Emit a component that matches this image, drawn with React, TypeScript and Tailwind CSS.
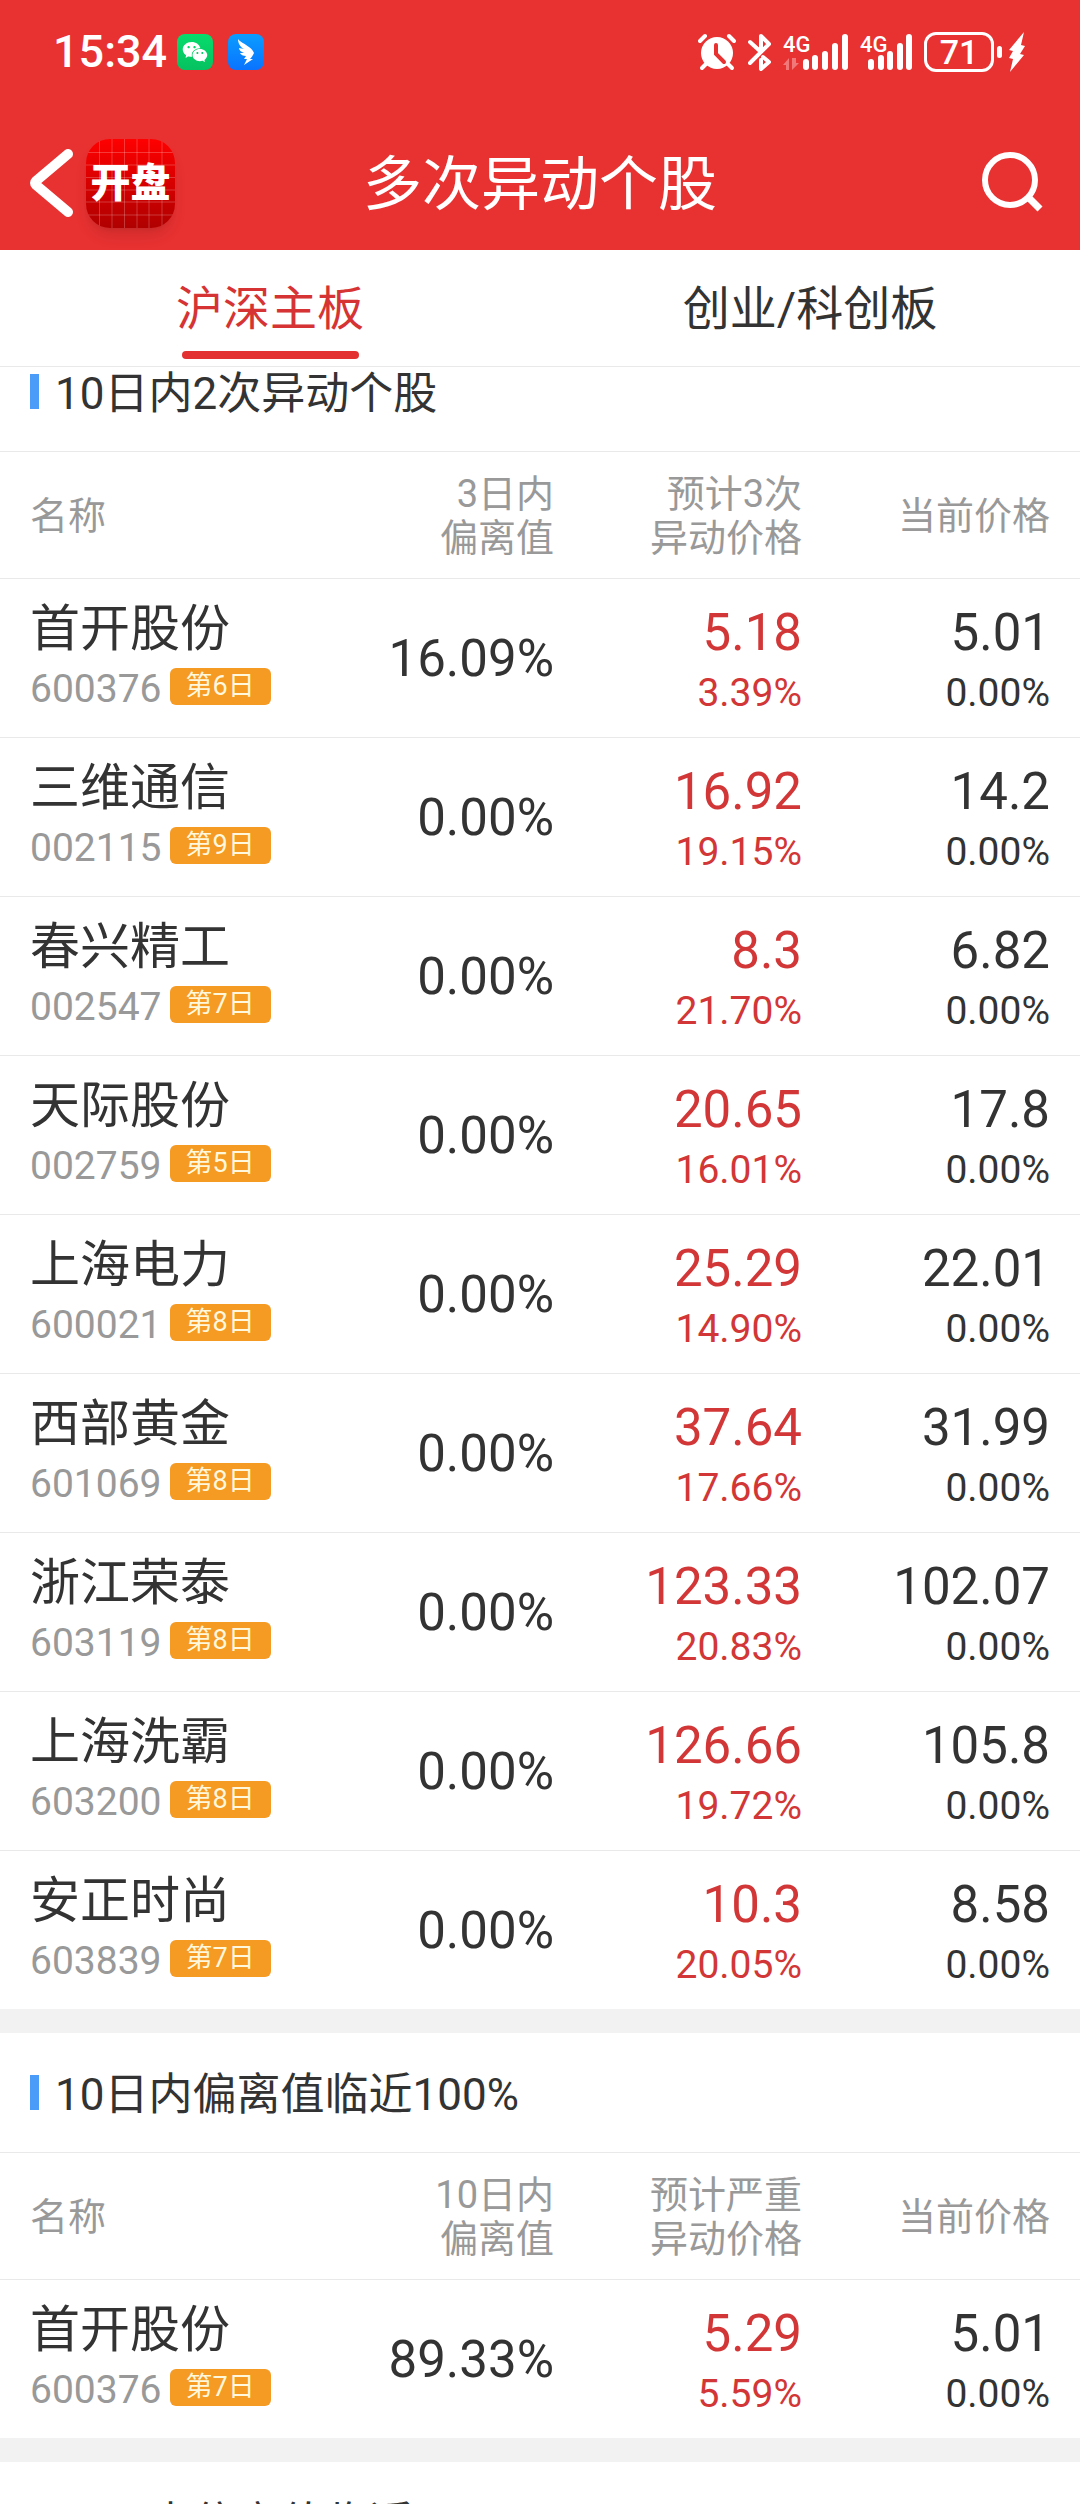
import React from 'react'
import { AiFillWechat } from 'react-icons/ai'

type Stock = {
  name: string
  code: string
  day: string
  deviation: string
  target: string
  targetPct: string
  price: string
  pricePct: string
}

type Section = {
  title: string
  columns: string[][]
  stocks: Stock[]
}

const sections: Section[] = [
  {
    title: '10日内2次异动个股',
    columns: [['名称'], ['3日内', '偏离值'], ['预计3次', '异动价格'], ['当前价格']],
    stocks: [
      { name: '首开股份', code: '600376', day: '第6日', deviation: '16.09%', target: '5.18', targetPct: '3.39%', price: '5.01', pricePct: '0.00%' },
      { name: '三维通信', code: '002115', day: '第9日', deviation: '0.00%', target: '16.92', targetPct: '19.15%', price: '14.2', pricePct: '0.00%' },
      { name: '春兴精工', code: '002547', day: '第7日', deviation: '0.00%', target: '8.3', targetPct: '21.70%', price: '6.82', pricePct: '0.00%' },
      { name: '天际股份', code: '002759', day: '第5日', deviation: '0.00%', target: '20.65', targetPct: '16.01%', price: '17.8', pricePct: '0.00%' },
      { name: '上海电力', code: '600021', day: '第8日', deviation: '0.00%', target: '25.29', targetPct: '14.90%', price: '22.01', pricePct: '0.00%' },
      { name: '西部黄金', code: '601069', day: '第8日', deviation: '0.00%', target: '37.64', targetPct: '17.66%', price: '31.99', pricePct: '0.00%' },
      { name: '浙江荣泰', code: '603119', day: '第8日', deviation: '0.00%', target: '123.33', targetPct: '20.83%', price: '102.07', pricePct: '0.00%' },
      { name: '上海洗霸', code: '603200', day: '第8日', deviation: '0.00%', target: '126.66', targetPct: '19.72%', price: '105.8', pricePct: '0.00%' },
      { name: '安正时尚', code: '603839', day: '第7日', deviation: '0.00%', target: '10.3', targetPct: '20.05%', price: '8.58', pricePct: '0.00%' },
    ],
  },
  {
    title: '10日内偏离值临近100%',
    columns: [['名称'], ['10日内', '偏离值'], ['预计严重', '异动价格'], ['当前价格']],
    stocks: [
      { name: '首开股份', code: '600376', day: '第7日', deviation: '89.33%', target: '5.29', targetPct: '5.59%', price: '5.01', pricePct: '0.00%' },
    ],
  },
  {
    title: '30日内偏离值临近200%',
    columns: [],
    stocks: [],
  },
]

const StatusBar = () => {
  return (
    <div className="flex h-[104px] items-center justify-between pr-[54px] pl-[53px]">
      <div className="flex items-center">
        <span className="text-[45px] leading-[46px] font-medium">15:34</span>
        <span className="ml-2.5 flex h-9 w-9 items-center justify-center rounded-lg bg-gradient-to-b from-[#07dc6c] to-[#06c160]">
          <AiFillWechat size={28} />
        </span>
        <svg className="ml-[15px]" width="36" height="36" viewBox="0 0 36 36" aria-hidden="true">
          <defs>
            <linearGradient id="wing" x1="0" y1="0" x2="0" y2="1">
              <stop offset="0" stopColor="#0a9dff" />
              <stop offset="1" stopColor="#0a73ff" />
            </linearGradient>
          </defs>
          <rect width="36" height="36" rx="8" fill="url(#wing)" />
          <path
            d="M10 5c2 3 6 4 11 8 3 2 4 4 5 6-1 2-2 4-4 6h3l-9 6 3-6h-3l2-3c-3 0-5-1-6-3l4 0c-3-1-5-3-5-5l5 1c-4-2-6-6-6-10z"
            fill="#fff"
          />
        </svg>
      </div>

      <div className="flex items-center">
        <svg width="38" height="38" viewBox="0 0 38 38" fill="none" stroke="#fff" strokeLinecap="round" aria-hidden="true">
          <circle cx="19" cy="20" r="16" fill="#fff" stroke="none" />
          <path d="M2 8l5-5M36 8l-5-5" strokeWidth="4" />
          <path d="M8 31l-4 4M30 31l4 4" strokeWidth="4" />
          <path d="M18 12v9l8 8" stroke="#e83131" strokeWidth="4" />
        </svg>
        <svg className="ml-3" width="24" height="38" viewBox="0 0 24 38" fill="none" stroke="#fff" strokeWidth="4" strokeLinecap="round" strokeLinejoin="round" aria-hidden="true">
          <path d="M2 9l11 10M2 30L21 11l-8-8v12M15 24l6 5-8 7v-9" />
        </svg>
        <svg className="ml-[11px]" width="66" height="38" viewBox="0 0 66 38" fill="#fff">
          <text x="0" y="19" fontSize="22" fontWeight="500">4G</text>
          <path d="M0 32l6-7v12H3v-5zM9 25v12l7-7h-3v-5z" opacity=".35" />
          <rect x="20" y="26" width="6" height="11" rx="3" />
          <rect x="29" y="22" width="6" height="15" rx="3" />
          <rect x="39" y="18" width="6" height="19" rx="3" />
          <rect x="49" y="10" width="6" height="27" rx="3" />
          <rect x="59" y="1" width="6" height="36" rx="3" />
        </svg>
        <svg className="ml-[11px]" width="54" height="38" viewBox="0 0 54 38" fill="#fff">
          <text x="0" y="19" fontSize="22" fontWeight="500">4G</text>
          <rect x="8" y="26" width="6" height="11" rx="3" />
          <rect x="18" y="22" width="6" height="15" rx="3" />
          <rect x="27" y="18" width="6" height="19" rx="3" />
          <rect x="37" y="10" width="6" height="27" rx="3" />
          <rect x="46" y="1" width="6" height="36" rx="3" />
        </svg>
        <div className="ml-2.5 flex h-10 w-[70px] items-center justify-center rounded-xl border-3 border-white text-[34px] leading-[34px] font-medium">
          71
        </div>
        <span className="ml-[3px] h-3 w-[5px] rounded-sm bg-white" />
        <svg className="ml-1.5" width="18" height="40" viewBox="0 0 18 40" fill="#fff" aria-hidden="true">
          <path d="M16 0L1 18l4 1-4 7 4 1-3 13 14-17-4-1 5-8-4-1z" />
        </svg>
      </div>
    </div>
  )
}

const AppLogo = () => {
  return (
    <div className="relative flex h-[89px] w-[89px] items-center justify-center overflow-hidden rounded-3xl bg-gradient-to-b from-[#ff0000] to-[#b00000] shadow-lg">
      <svg className="absolute inset-0" width="89" height="89" viewBox="0 0 89 89" stroke="#fff" strokeOpacity=".22" aria-hidden="true">
        <path d="M13.500 0v89M26 0v89M38.500 0v89M51 0v89M63 0v89M76 0v89M0 13.500h89M0 26h89M0 38.500h89M0 51h89M0 63h89M0 76h89" />
      </svg>
      <span className="relative pt-0.5 text-[40px] leading-[44px] font-black">开盘</span>
    </div>
  )
}

const NavBar = () => {
  return (
    <div className="mt-3 grid h-[134px] grid-cols-[1fr_auto_1fr] items-center px-7">
      <div className="flex items-center gap-2.5">
        <button type="button" aria-label="返回">
          <svg width="48" height="72" viewBox="0 0 48 72" fill="none" stroke="#fff" strokeWidth="10" strokeLinecap="round" strokeLinejoin="round">
            <path d="M40 7L8 34q-2 2 0 4L40 65" />
          </svg>
        </button>
        <AppLogo />
      </div>
      <h1 className="pt-1 text-[59px] leading-[64px]">多次异动个股</h1>
      <button type="button" aria-label="搜索" className="justify-self-end">
        <svg width="72" height="68" viewBox="0 0 72 68" fill="none" stroke="#fff" strokeWidth="6">
          <circle cx="30" cy="31" r="25" />
          <path d="M48 48l12 12" strokeWidth="7" />
        </svg>
      </button>
    </div>
  )
}

const Tab = ({ label, active }: { label: string; active?: boolean }) => {
  return (
    <button
      type="button"
      role="tab"
      aria-selected={active ? true : false}
      className={`flex h-[116px] flex-1 flex-col items-center justify-end pb-[7px] text-[47px] leading-[60px] ${active ? 'text-[#d63434]' : 'text-[#333333]'}`}
    >
      {label}
      <span className={`mt-3 h-2 w-[177px] rounded-sm ${active ? 'bg-[#e33131]' : 'bg-transparent'}`} />
    </button>
  )
}

const StockRow = ({ stock }: { stock: Stock }) => {
  return (
    <tr className="h-[159px] border-b border-[#e9e9e9] last:border-b-0">
      <td className="pt-0.5 pl-[30px]">
        <div className="text-[50px] leading-[60px]">{stock.name}</div>
        <div className="flex h-[60px] items-center gap-2">
          <span className="text-[39px] leading-[60px] text-[#999999]">{stock.code}</span>
          <span className="mb-1 rounded-md bg-[#f59a23] px-4 text-[27px] leading-[37px] text-[#fff8dc]">{stock.day}</span>
        </div>
      </td>
      <td className="pt-0.5 text-right text-[51px] leading-[60px]">{stock.deviation}</td>
      <td className="pt-2.5 text-right text-[#d23636]">
        <div className="text-[51px] leading-[60px]">{stock.target}</div>
        <div className="text-[39px] leading-[60px]">{stock.targetPct}</div>
      </td>
      <td className="pt-2.5 pr-[30px] text-right">
        <div className="text-[51px] leading-[60px]">{stock.price}</div>
        <div className="text-[39px] leading-[60px]">{stock.pricePct}</div>
      </td>
    </tr>
  )
}

const StockSection = ({ section }: { section: Section }) => {
  return (
    <section className="bg-white">
      <div className="flex h-[120px] items-center gap-4 border-b border-[#e9e9e9] px-[30px]">
        <span className="h-[35px] w-[9px] bg-[#4a9cf8]" />
        <h2 className="pt-1 text-[44px] leading-[60px]">{section.title}</h2>
      </div>
      {section.stocks.length > 0 && (
        <table className="w-full table-fixed border-collapse">
          <colgroup>
            <col />
            <col className="w-[250px]" />
            <col className="w-[248px]" />
            <col className="w-[278px]" />
          </colgroup>
          <thead>
            <tr className="h-[126px] border-b border-[#e9e9e9] text-[38px] leading-[44px] text-[#999999]">
              {section.columns.map((lines, i) => (
                <th key={i} scope="col" className="pt-0.5 text-right font-normal first:pl-[30px] first:text-left last:pr-[30px]">
                  {lines.map((line) => (
                    <span key={line} className="block">{line}</span>
                  ))}
                </th>
              ))}
            </tr>
          </thead>
          <tbody>
            {section.stocks.map((stock) => (
              <StockRow key={stock.code} stock={stock} />
            ))}
          </tbody>
        </table>
      )}
    </section>
  )
}

const App = () => {
  return (
    <div className="flex h-screen flex-col overflow-hidden bg-white font-['Roboto','Noto_Sans_CJK_SC',sans-serif] text-[#333333]">
      <header className="z-10 shrink-0 bg-[#e83131] text-white">
        <StatusBar />
        <NavBar />
      </header>
      <div role="tablist" className="z-10 flex shrink-0 border-b border-[#e9e9e9] bg-white">
        <Tab label="沪深主板" active />
        <Tab label="创业/科创板" />
      </div>
      <main className="-mt-[35px] flex min-h-0 flex-1 flex-col gap-6 overflow-hidden bg-[#f2f2f2]">
        {sections.map((section) => (
          <StockSection key={section.title} section={section} />
        ))}
      </main>
    </div>
  )
}

export default App
